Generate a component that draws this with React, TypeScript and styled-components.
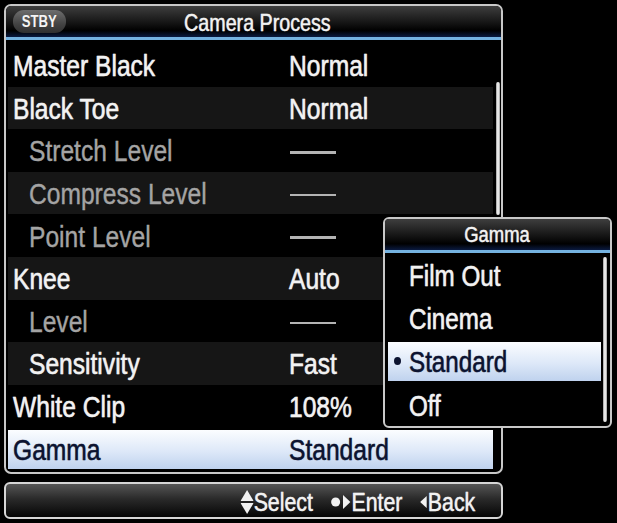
import React from "react";
import styled, { createGlobalStyle } from "styled-components";

const Global = createGlobalStyle`
  html, body { margin: 0; padding: 0; background: #000; }
  body { width: 617px; height: 523px; overflow: hidden; font-family: "Liberation Sans", Arial, sans-serif; }
  * { box-sizing: border-box; }
`;

/* the OSD face is a narrow grotesque: Arial metrics squeezed horizontally */
const Narrow = styled.span<{ $origin?: string }>`
  display: inline-block;
  white-space: nowrap;
  transform: scaleX(0.82);
  transform-origin: ${(p) => p.$origin ?? "left"} center;
`;

const Screen = styled.div`
  position: relative;
  width: 617px;
  height: 523px;
  padding: 4px 0 0 4px;
  display: flex;
  flex-direction: column;
  gap: 8px;
  background: #000;
`;

const Panel = styled.div`
  width: 499px;
  height: 470px;
  border: 2px solid #c8c8c8;
  border-radius: 7px;
  display: flex;
  flex-direction: column;
  overflow: hidden;
  background: #000;
`;

const Header = styled.div`
  flex: none;
  height: 34px;
  display: grid;
  grid-template-columns: 1fr auto 1fr;
  align-items: center;
  background: linear-gradient(to bottom, #3e3e3e 0%, #141414 55%, #000 80%, #0a1a40 100%);
  border-bottom: 3px solid #74b2e0;
  padding: 0 0 0 7px;
`;

const Badge = styled.div`
  justify-self: start;
  width: 53px;
  height: 23px;
  border-radius: 11px;
  background: linear-gradient(to bottom, #6e6e6e, #444 60%, #303030);
  color: #f4f4f4;
  font-weight: bold;
  font-size: 16px;
  display: flex;
  align-items: center;
  justify-content: center;
  padding-top: 1px;
`;

const Title = styled.div<{ $size: number }>`
  grid-column: 2;
  color: #f2f2f2;
  font-size: ${(p) => p.$size}px;
  line-height: 1;
  padding-top: 2px;
  text-shadow: 0 0 1px rgba(255, 255, 255, 0.5);
  -webkit-text-stroke: 0.3px currentColor;
`;

const Body = styled.div`
  flex: 1;
  display: flex;
  padding: 4px 0 2px 2px;
`;

const List = styled.div`
  flex: 1;
  display: flex;
  flex-direction: column;
`;

const Row = styled.div<{ $alt?: boolean; $sel?: boolean }>`
  flex: 1;
  display: grid;
  grid-template-columns: 276px 1fr;
  align-items: center;
  padding-left: 5px;
  font-size: 30px;
  line-height: 1;
  -webkit-text-stroke: 0.4px currentColor;
  color: ${(p) => (p.$sel ? "#0c1330" : "#f2f2f2")};
  background: ${(p) =>
    p.$sel
      ? "linear-gradient(to bottom, #fbfdff, #dde8f8 55%, #bfd2ee) center bottom 1px / 100% 39px no-repeat"
      : p.$alt
      ? "#161616"
      : "transparent"};
  text-shadow: ${(p) => (p.$sel ? "0 0 1px rgba(12,19,48,0.5)" : "0 0 1px rgba(255,255,255,0.6)")};
`;

const Label = styled.span<{ $indent?: boolean; $dim?: boolean }>`
  padding-left: ${(p) => (p.$indent ? "16px" : "0")};
  color: ${(p) => (p.$dim ? "#a4a4a4" : "inherit")};
  text-shadow: ${(p) => (p.$dim ? "none" : "inherit")};
  padding-top: 2px;
`;

const Value = styled.span`
  padding-top: 2px;
`;

const Dash = styled.span<{ $thin?: boolean }>`
  display: block;
  width: 46px;
  height: ${(p) => (p.$thin ? "2px" : "3px")};
  margin: 4px 0 0 1px;
  background: #b4b4b4;
`;

const ScrollCol = styled.div<{ $w: number }>`
  width: ${(p) => p.$w}px;
  flex: none;
  position: relative;
`;

const Thumb = styled.div<{ $left: number }>`
  position: absolute;
  left: ${(p) => p.$left}px;
  width: 4px;
  border-radius: 2px;
  background: linear-gradient(to right, #9a9a9a, #ffffff 50%, #9a9a9a);
`;

const Footer = styled.div`
  width: 499px;
  height: 37px;
  border: 2px solid #d6d6d6;
  border-radius: 6px;
  background: linear-gradient(to bottom, #555 0%, #2a2a2a 45%, #050505 100%);
  display: flex;
  justify-content: flex-end;
  align-items: center;
  padding-right: 26px;
  color: #f2f2f2;
  font-size: 26px;
  line-height: 1;
  -webkit-text-stroke: 0.3px currentColor;
  text-shadow: 0 0 1px rgba(255, 255, 255, 0.6);
`;

const Hints = styled(Narrow)`
  display: flex;
  align-items: center;
  gap: 22px;
  padding-top: 2px;
`;

const Hint = styled.span`
  display: flex;
  align-items: center;
`;

const HintIcon = styled.svg`
  display: block;
  flex: none;
`;

const Popup = styled.div`
  position: absolute;
  left: 383px;
  top: 217px;
  width: 229px;
  height: 211px;
  border: 2px solid #c8c8c8;
  border-radius: 6px;
  background: #000;
  display: flex;
  flex-direction: column;
  overflow: hidden;
`;

const PopHeader = styled(Header)`
  padding: 0;
`;

const PopBody = styled.div`
  flex: 1;
  display: flex;
  padding: 2px 0 2px 3px;
`;

const PopList = styled.div`
  flex: 1;
  display: flex;
  flex-direction: column;
  gap: 4px;
`;

const PopItem = styled.div<{ $sel?: boolean }>`
  flex: 1;
  display: flex;
  align-items: center;
  font-size: 29.5px;
  line-height: 1;
  -webkit-text-stroke: 0.4px currentColor;
  color: ${(p) => (p.$sel ? "#0c1330" : "#f2f2f2")};
  background: ${(p) =>
    p.$sel ? "linear-gradient(to bottom, #fbfdff, #dde8f8 55%, #bfd2ee)" : "transparent"};
  text-shadow: ${(p) => (p.$sel ? "0 0 1px rgba(12,19,48,0.5)" : "0 0 1px rgba(255,255,255,0.6)")};
`;

const Bullet = styled.span<{ $on?: boolean }>`
  width: 21px;
  flex: none;
  display: flex;
  justify-content: center;
  &::before {
    content: "";
    display: ${(p) => (p.$on ? "block" : "none")};
    width: 7px;
    height: 8px;
    border-radius: 50%;
    background: #0c1330;
    margin-left: -3px;
  }
`;

const ItemText = styled(Narrow)`
  padding-top: 2px;
`;

type R = { label: string; value?: string; dash?: "thick" | "thin"; indent?: boolean; dim?: boolean; sel?: boolean };

const rows: R[] = [
  { label: "Master Black", value: "Normal" },
  { label: "Black Toe", value: "Normal" },
  { label: "Stretch Level", dash: "thick", indent: true, dim: true },
  { label: "Compress Level", dash: "thin", indent: true, dim: true },
  { label: "Point Level", dash: "thick", indent: true, dim: true },
  { label: "Knee", value: "Auto" },
  { label: "Level", dash: "thin", indent: true, dim: true },
  { label: "Sensitivity", value: "Fast", indent: true },
  { label: "White Clip", value: "108%" },
  { label: "Gamma", value: "Standard", sel: true },
];

const options = ["Film Out", "Cinema", "Standard", "Off"];

export default function App() {
  return (
    <>
      <Global />
      <Screen>
        <Panel>
          <Header>
            <Badge>
              <Narrow $origin="center">STBY</Narrow>
            </Badge>
            <Title $size={24}>
              <Narrow $origin="center">Camera Process</Narrow>
            </Title>
          </Header>
          <Body>
            <List>
              {rows.map((r, i) => (
                <Row key={r.label + i} $alt={i % 2 === 1} $sel={r.sel}>
                  <Label $indent={r.indent} $dim={r.dim}>
                    <Narrow>{r.label}</Narrow>
                  </Label>
                  {r.dash ? (
                    <Dash $thin={r.dash === "thin"} />
                  ) : (
                    <Value>
                      <Narrow>{r.value}</Narrow>
                    </Value>
                  )}
                </Row>
              ))}
            </List>
            <ScrollCol $w={8}>
              <Thumb $left={3} style={{ top: 38, height: 133 }} />
            </ScrollCol>
          </Body>
        </Panel>
        <Footer>
          <Hints $origin="right">
            <Hint>
              <HintIcon width="16" height="26" viewBox="0 0 16 26">
                <polygon points="8,1 16,12 0,12" fill="#f2f2f2" />
                <polygon points="0,14 16,14 8,25" fill="#f2f2f2" />
              </HintIcon>
              Select
            </Hint>
            <Hint>
              <HintIcon width="25" height="26" viewBox="0 0 25 26">
                <ellipse cx="6" cy="13" rx="5.5" ry="4.6" fill="#f2f2f2" />
                <polygon points="15,6 24,13 15,20" fill="#f2f2f2" />
              </HintIcon>
              Enter
            </Hint>
            <Hint>
              <HintIcon width="9" height="26" viewBox="0 0 9 26">
                <polygon points="8,7 0,13 8,19" fill="#f2f2f2" />
              </HintIcon>
              Back
            </Hint>
          </Hints>
        </Footer>
        <Popup>
          <PopHeader>
            <Title $size={22.5}>
              <Narrow $origin="center">Gamma</Narrow>
            </Title>
          </PopHeader>
          <PopBody>
            <PopList>
              {options.map((o) => (
                <PopItem key={o} $sel={o === "Standard"}>
                  <Bullet $on={o === "Standard"} />
                  <ItemText>{o}</ItemText>
                </PopItem>
              ))}
            </PopList>
            <ScrollCol $w={9}>
              <Thumb $left={2} style={{ top: 2, height: 165 }} />
            </ScrollCol>
          </PopBody>
        </Popup>
      </Screen>
    </>
  );
}
